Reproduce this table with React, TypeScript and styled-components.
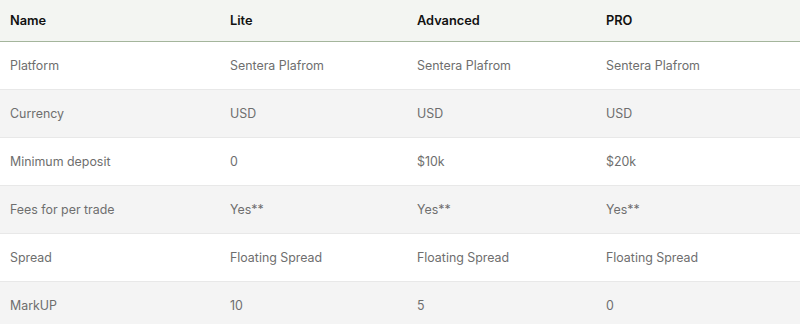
import styled, { createGlobalStyle } from "styled-components";

const GlobalStyle = createGlobalStyle`
  html, body {
    margin: 0;
    padding: 0;
    background: #ffffff;
  }
  body {
    font-family: Inter, "Noto Sans", "Liberation Sans", sans-serif;
  }
`;

const columns = ["Name", "Lite", "Advanced", "PRO"];

const rows: string[][] = [
  ["Platform", "Sentera Plafrom", "Sentera Plafrom", "Sentera Plafrom"],
  ["Currency", "USD", "USD", "USD"],
  ["Minimum deposit", "0", "$10k", "$20k"],
  ["Fees for per trade", "Yes**", "Yes**", "Yes**"],
  ["Spread", "Floating Spread", "Floating Spread", "Floating Spread"],
  ["MarkUP", "10", "5", "0"],
];

export default function App() {
  return (
    <>
      <GlobalStyle />
      <Table>
        <HeadRow>
          {columns.map((c) => (
            <HeadCell key={c}>{c}</HeadCell>
          ))}
        </HeadRow>
        {rows.map((r, i) => (
          <Row key={r[0]} $striped={i % 2 === 1}>
            {r.map((v, j) => (
              <Cell key={j}>{v}</Cell>
            ))}
          </Row>
        ))}
      </Table>
    </>
  );
}

const Table = styled.div`
  width: 800px;
  display: flex;
  flex-direction: column;
`;

const HeadRow = styled.div`
  display: grid;
  grid-template-columns: 220px 187px 189px 1fr;
  height: 41px;
  align-items: center;
  background: #f3f5f2;
  border-bottom: 1px solid #a4b59c;
`;

const HeadCell = styled.div`
  padding-left: 10px;
  font-size: 12.8px;
  font-weight: 600;
  color: #111111;
`;

const Row = styled.div<{ $striped: boolean }>`
  display: grid;
  grid-template-columns: 220px 187px 189px 1fr;
  height: 47px;
  align-items: center;
  background: ${(p) => (p.$striped ? "#f4f4f4" : "#ffffff")};
  border-bottom: 1px solid #e8e8e8;
`;

const Cell = styled.div`
  padding-left: 10px;
  font-size: 12.4px;
  color: #6e6e6e;
  padding-bottom: 1px;
`;
